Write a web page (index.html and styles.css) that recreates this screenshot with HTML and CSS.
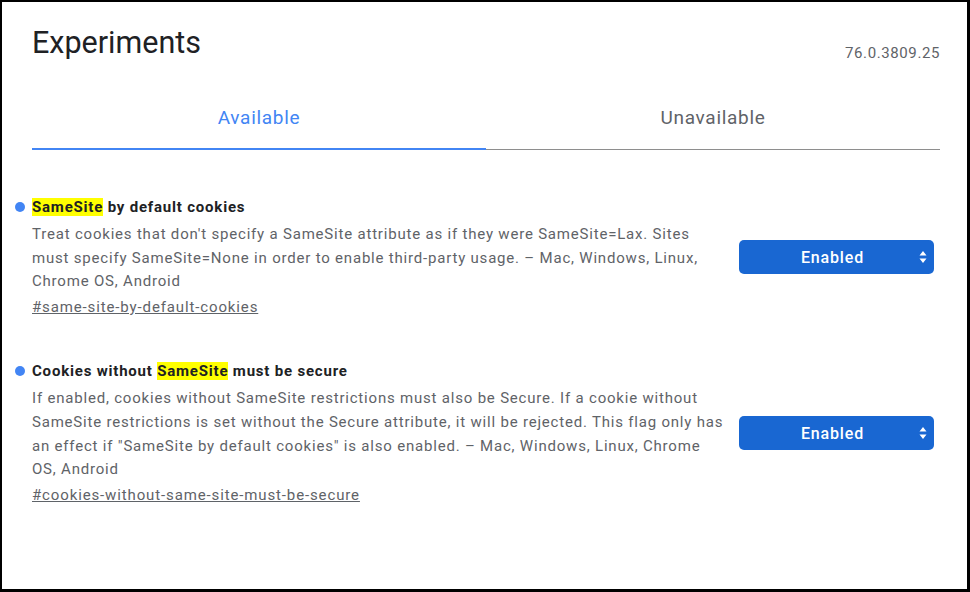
FILE: index.html
```html
<!DOCTYPE html>
<html>
<head>
<meta charset="utf-8">
<title>Experiments</title>
<link rel="stylesheet" href="styles.css">
</head>
<body>
<div class="frame">
  <header class="header">
    <h1 class="title">Experiments</h1>
    <span class="version">76.0.3809.25</span>
  </header>
  <nav class="tabs">
    <div class="tab tab-active">Available</div>
    <div class="tab tab-inactive">Unavailable</div>
  </nav>
  <section class="flags">
    <div class="flag">
      <div class="flag-text">
        <div class="flag-title"><span class="dot"></span><mark class="hl">SameSite</mark> by default cookies</div>
        <p class="flag-desc">Treat cookies that don't specify a SameSite attribute as if they were SameSite=Lax. Sites must specify SameSite=None in order to enable third-party usage. – Mac, Windows, Linux, Chrome OS, Android</p>
        <a class="flag-link" href="#">#same-site-by-default-cookies</a>
      </div>
      <div class="select"><span class="select-label">Enabled</span><svg class="select-arrows" width="8" height="14" viewBox="0 0 8 14"><path d="M4 1 L7.5 5.5 L0.5 5.5 Z M4 13 L7.5 8.5 L0.5 8.5 Z" fill="#ffffff"/></svg></div>
    </div>
    <div class="flag">
      <div class="flag-text">
        <div class="flag-title"><span class="dot"></span>Cookies without <mark class="hl">SameSite</mark> must be secure</div>
        <p class="flag-desc">If enabled, cookies without SameSite restrictions must also be Secure. If a cookie without SameSite restrictions is set without the Secure attribute, it will be rejected. This flag only has an effect if "SameSite by default cookies" is also enabled. – Mac, Windows, Linux, Chrome OS, Android</p>
        <a class="flag-link" href="#">#cookies-without-same-site-must-be-secure</a>
      </div>
      <div class="select"><span class="select-label">Enabled</span><svg class="select-arrows" width="8" height="14" viewBox="0 0 8 14"><path d="M4 1 L7.5 5.5 L0.5 5.5 Z M4 13 L7.5 8.5 L0.5 8.5 Z" fill="#ffffff"/></svg></div>
    </div>
  </section>
</div>
</body>
</html>
```

FILE: styles.css
```css
* { box-sizing: border-box; }
html, body { margin: 0; padding: 0; background: #ffffff; }
body { font-family: Roboto, "Liberation Sans", Arial, sans-serif; }

.frame {
  width: 970px;
  height: 592px;
  border-style: solid;
  border-color: #000000;
  border-width: 2px 3px 3px 2px;
  padding: 0 27px 0 30px;
  background: #ffffff;
  overflow: hidden;
}

.header {
  display: flex;
  justify-content: space-between;
  align-items: flex-start;
  padding-top: 23px;
}
.title {
  margin: 0;
  font-size: 30.5px;
  line-height: 36px;
  font-weight: 400;
  color: #202124;
}
.version {
  font-size: 15px;
  line-height: 15px;
  letter-spacing: 0.6px;
  color: #5f6368;
  margin-top: 21px;
}

.tabs {
  display: grid;
  grid-template-columns: 1fr 1fr;
  align-items: start;
  margin-top: 45px;
}
.tab {
  text-align: center;
  font-size: 19px;
  line-height: 24px;
  letter-spacing: 0.7px;
}
.tab-active {
  color: #4285f4;
  padding-bottom: 18px;
  border-bottom: 2px solid #4285f4;
}
.tab-inactive {
  color: #5f6368;
  padding-bottom: 19px;
  border-bottom: 1px solid #8e8e8e;
}

.flags {
  display: flex;
  flex-direction: column;
  gap: 40px;
  margin-top: 45px;
}
.flag {
  display: grid;
  grid-template-columns: 693px 195px;
  column-gap: 14px;
  align-items: center;
}
.flag-text {
  display: flex;
  flex-direction: column;
  align-items: flex-start;
}
.flag-title {
  position: relative;
  font-size: 15px;
  line-height: 24px;
  font-weight: 700;
  letter-spacing: 0.8px;
  color: #202124;
}
.dot {
  position: absolute;
  left: -17px;
  top: 7px;
  width: 10px;
  height: 10px;
  border-radius: 50%;
  background: #4285f4;
}
.hl {
  background: #ffff00;
  color: #202124;
}
.flag-desc {
  margin: 4px 0 0 0;
  font-size: 15px;
  line-height: 23.7px;
  letter-spacing: 0.8px;
  color: #5f6368;
}
.flag-link {
  margin-top: 1px;
  font-size: 15px;
  line-height: 24px;
  letter-spacing: 0.87px;
  color: #5f6368;
  text-decoration: underline;
}

.select {
  position: relative;
  height: 34px;
  border-radius: 5px;
  background: #1967d2;
  display: flex;
  align-items: center;
  justify-content: center;
  padding-right: 8px;
}
.select-label {
  color: #ffffff;
  font-size: 16px;
  font-weight: 500;
  letter-spacing: 0.85px;
}
.select-arrows {
  position: absolute;
  right: 7px;
  top: 10px;
}
```
